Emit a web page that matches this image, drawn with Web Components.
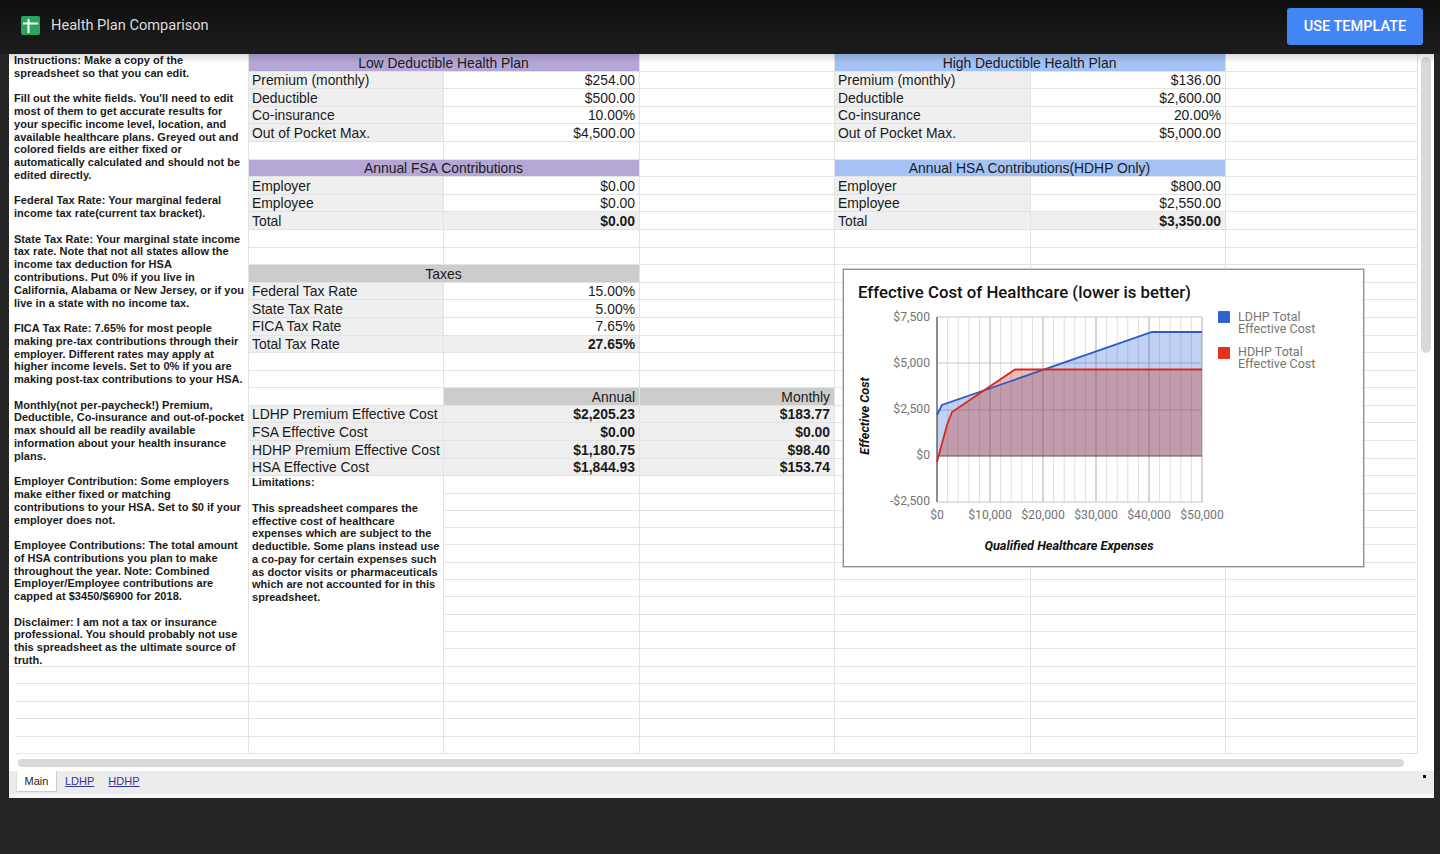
<!DOCTYPE html>
<html>
<head>
<meta charset="utf-8">
<title>Health Plan Comparison</title>
<style>
  html, body { margin: 0; height: 100%; background: #252525; overflow: hidden; }
  body { font-family: "Liberation Sans", Arial, sans-serif; }
</style>
</head>
<body>
<template-bar title="Health Plan Comparison"></template-bar>
<sheet-panel>
  <sheet-grid>
    <div slot="notes">Instructions: Make a copy of the
spreadsheet so that you can edit.

Fill out the white fields. You'll need to edit
most of them to get accurate results for
your specific income level, location, and
available healthcare plans. Greyed out and
colored fields are either fixed or
automatically calculated and should not be
edited directly.

Federal Tax Rate: Your marginal federal
income tax rate(current tax bracket).

State Tax Rate: Your marginal state income
tax rate. Note that not all states allow the
income tax deduction for HSA
contributions. Put 0% if you live in
California, Alabama or New Jersey, or if you
live in a state with no income tax.

FICA Tax Rate: 7.65% for most people
making pre-tax contributions through their
employer. Different rates may apply at
higher income levels. Set to 0% if you are
making post-tax contributions to your HSA.

Monthly(not per-paycheck!) Premium,
Deductible, Co-insurance and out-of-pocket
max should all be readily available
information about your health insurance
plans.

Employer Contribution: Some employers
make either fixed or matching
contributions to your HSA. Set to $0 if your
employer does not.

Employee Contributions: The total amount
of HSA contributions you plan to make
throughout the year. Note: Combined
Employer/Employee contributions are
capped at $3450/$6900 for 2018.

Disclaimer: I am not a tax or insurance
professional. You should probably not use
this spreadsheet as the ultimate source of
truth.</div>
    <div slot="limits">Limitations:

This spreadsheet compares the
effective cost of healthcare
expenses which are subject to the
deductible. Some plans instead use
a co-pay for certain expenses such
as doctor visits or pharmaceuticals
which are not accounted for in this
spreadsheet.</div>
    <cost-chart slot="chart"></cost-chart>
  </sheet-grid>
</sheet-panel>

<script>
class TemplateBar extends HTMLElement {
  connectedCallback() {
    this.attachShadow({ mode: "open" });
    this.shadowRoot.innerHTML = `
      <style>
        :host {
          display: flex;
          align-items: center;
          height: 54px;
          padding: 0 17px 4px 21px;
          box-sizing: border-box;
          background: linear-gradient(#0f0f0f, #1c1c1c);
          font-family: Roboto, sans-serif;
        }
        svg { width: 19px; height: 19px; margin-right: 11px; }
        .name { flex: 1; font-size: 14.6px; color: #dcdcdc; }
        button {
          width: 136px;
          height: 37px;
          margin-top: 3px;
          border: 0;
          border-radius: 3px;
          background: #4285f4;
          color: #fff;
          font: 500 14.5px Roboto, sans-serif;
        }
      </style>
      <svg viewBox="0 0 19 19">
        <rect width="19" height="19" rx="2" fill="#2ca45f"/>
        <path d="M2 7.5h15M7.5 3v14" stroke="#fff" stroke-width="2" fill="none"/>
      </svg>
      <div class="name">${this.getAttribute("title")}</div>
      <button>USE TEMPLATE</button>
    `;
  }
}

class SheetPanel extends HTMLElement {
  connectedCallback() {
    this.attachShadow({ mode: "open" });
    this.shadowRoot.innerHTML = `
      <style>
        :host {
          display: flex;
          flex-direction: column;
          position: relative;
          height: 744px;
          margin: 0 6px 0 9px;
          background: #fff;
        }
        .shade {
          position: absolute;
          left: 0;
          right: 0;
          top: 0;
          height: 9px;
          background: linear-gradient(rgba(0,0,0,.14), rgba(0,0,0,0));
        }
        .top { display: flex; height: 701px; }
        .vbar {
          width: 10px;
          height: 296px;
          margin: 3px 3px 0 3px;
          border-radius: 5px;
          background: #d9d9dd;
        }
        .hbar {
          width: 1386px;
          height: 8px;
          margin: 4px 0 4px 9px;
          border-radius: 4px;
          background: #d9d9dd;
        }
        .tabs {
          position: relative;
          display: flex;
          align-items: flex-start;
          height: 27px;
          padding-left: 7px;
          box-sizing: border-box;
          background: #ececec;
          box-shadow: inset 0 -4px 0 #f5f5f5;
          font: 11px "Liberation Sans", Arial, sans-serif;
        }
        .main {
          width: 41px;
          height: 21px;
          line-height: 21px;
          text-align: center;
          box-sizing: border-box;
          background: #fff;
          color: #222;
          border-left: 1px solid #ddd;
          border-right: 1px solid #ccc;
          border-bottom: 1px solid #ccc;
        }
        a { line-height: 21px; color: #35359a; margin-left: 8px; }
        a + a { margin-left: 14px; }
        .dot {
          position: absolute;
          right: 8px;
          top: 4px;
          width: 3px;
          height: 3px;
          background: #111;
        }
      </style>
      <div class="top"><slot></slot><div class="vbar"></div></div>
      <div class="hbar"></div>
      <div class="tabs">
        <div class="main">Main</div>
        <a href="#">LDHP</a>
        <a href="#">HDHP</a>
        <div class="dot"></div>
      </div>
      <div class="shade"></div>
    `;
  }
}

// [row, col, span, text, class]
const CELLS = [
  [1, 2, 2, "Low Deductible Health Plan", "head purple"],
  [1, 5, 2, "High Deductible Health Plan", "head blue"],
  [7, 2, 2, "Annual FSA Contributions", "head purple"],
  [7, 5, 2, "Annual HSA Contributions(HDHP Only)", "head blue"],
  [13, 2, 2, "Taxes", "head grey"],
  [20, 3, 1, "Annual", "num grey"],
  [20, 4, 1, "Monthly", "num grey"],
];

function pairs(row, col, list) {
  list.forEach((p, i) => {
    CELLS.push([row + i, col, 1, p[0], "label"]);
    CELLS.push([row + i, col + 1, 1, p[1], p[2] ? "num total" : "num"]);
  });
}
pairs(2, 2, [["Premium (monthly)", "$254.00"], ["Deductible", "$500.00"], ["Co-insurance", "10.00%"], ["Out of Pocket Max.", "$4,500.00"]]);
pairs(2, 5, [["Premium (monthly)", "$136.00"], ["Deductible", "$2,600.00"], ["Co-insurance", "20.00%"], ["Out of Pocket Max.", "$5,000.00"]]);
pairs(8, 2, [["Employer", "$0.00"], ["Employee", "$0.00"], ["Total", "$0.00", 1]]);
pairs(8, 5, [["Employer", "$800.00"], ["Employee", "$2,550.00"], ["Total", "$3,350.00", 1]]);
pairs(14, 2, [["Federal Tax Rate", "15.00%"], ["State Tax Rate", "5.00%"], ["FICA Tax Rate", "7.65%"], ["Total Tax Rate", "27.65%", 1]]);
[
  ["LDHP Premium Effective Cost", "$2,205.23", "$183.77"],
  ["FSA Effective Cost", "$0.00", "$0.00"],
  ["HDHP Premium Effective Cost", "$1,180.75", "$98.40"],
  ["HSA Effective Cost", "$1,844.93", "$153.74"],
].forEach((r, i) => {
  CELLS.push([21 + i, 2, 1, r[0], "label"]);
  CELLS.push([21 + i, 3, 1, r[1], "num total"]);
  CELLS.push([21 + i, 4, 1, r[2], "num total"]);
});

class SheetGrid extends HTMLElement {
  connectedCallback() {
    this.attachShadow({ mode: "open" });
    const taken = new Set();
    let html = "";
    CELLS.forEach(([row, col, span, text, cls]) => {
      for (let i = 0; i < span; i++) taken.add(row + ":" + (col + i));
      html += `<div class="cell ${cls}" style="grid-area:${row}/${col}/span 1/span ${span}">${text}</div>`;
    });
    // blank cells fill whatever the table and the two merged notes leave free
    for (let row = 1; row <= 40; row++) {
      for (let col = 1; col <= 7; col++) {
        if (taken.has(row + ":" + col)) continue;
        if (col === 1 && row <= 35) continue;
        if (col === 2 && row >= 25 && row <= 35) continue;
        html += `<div class="cell${col === 1 ? " first" : ""}" style="grid-area:${row}/${col}"></div>`;
      }
    }
    this.shadowRoot.innerHTML = `
      <style>
        :host {
          display: block;
          position: relative;
          width: 1409px;
          height: 701px;
          color: #1a1a1a;
        }
        .grid {
          display: grid;
          grid-template-columns: 240px 195px 196px 195px 196px 195px 192px;
          grid-template-rows: repeat(24, 17.6px) repeat(11, 17.3px) repeat(5, 17.6px);
          font: 13.9px/17px "Liberation Sans", Arial, sans-serif;
        }
        .cell {
          box-sizing: border-box;
          min-width: 0;
          padding: .5px 4px 0 3px;
          white-space: nowrap;
          border-right: 1px solid #e3e3e3;
          border-bottom: 1px solid #e3e3e3;
        }
        .first { margin-left: 6px; }
        .head { text-align: center; }
        .num { text-align: right; }
        .label { background: #efefef; }
        .total { background: #efefef; font-weight: bold; }
        .purple { background: #b4a7d6; }
        .blue { background: #a4c2f4; }
        .grey { background: #ccc; }
        .note {
          box-sizing: border-box;
          padding: 0 3px 0 5px;
          white-space: pre-line;
          overflow: visible;
          font: bold 11px/12.77px "Liberation Sans", Arial, sans-serif;
          letter-spacing: .03px;
          border-right: 1px solid #e3e3e3;
          border-bottom: 1px solid #e3e3e3;
        }
        .note.limits { padding-left: 3px; }
      </style>
      <div class="grid">
        <div class="note" style="grid-area:1/1/span 35/span 1"><slot name="notes"></slot></div>
        <div class="note limits" style="grid-area:25/2/span 11/span 1"><slot name="limits"></slot></div>
        ${html}
      </div>
      <slot name="chart"></slot>
    `;
  }
}

class CostChart extends HTMLElement {
  connectedCallback() {
    this.attachShadow({ mode: "open" });
    const left = 937, right = 1202, top = 317, bottom = 502, zero = 456;
    let grid = "";
    for (let i = 0; i <= 25; i++) {
      const x = left + i * 10.6;
      grid += `<line x1="${x}" x2="${x}" y1="${top}" y2="${bottom}" stroke="${i % 5 ? "#dedede" : "#adadad"}"/>`;
    }
    [317, 363, 410, 502].forEach(y => {
      grid += `<line x1="${left}" x2="${right}" y1="${y}" y2="${y}" stroke="#c4c4c4"/>`;
    });
    const ldhp = "937,415 942,405 1152,332 1202,332";
    const hdhp = "937,462 947,425 952,412 1015,369.5 1202,369.5";
    const yLabels = [["$7,500", 317], ["$5,000", 363], ["$2,500", 409], ["$0", 455], ["-$2,500", 501]];
    const xLabels = ["$0", "$10,000", "$20,000", "$30,000", "$40,000", "$50,000"];
    this.shadowRoot.innerHTML = `
      <style>
        :host {
          position: absolute;
          left: 834px;
          top: 215px;
          width: 521px;
          height: 298px;
          box-sizing: border-box;
          background: #fff;
          border: 1px solid #8f8f8f;
          outline: 1px solid #d4d4d4;
        }
        svg { display: block; font-family: Roboto, sans-serif; }
        .tick { font-size: 12.2px; fill: #757575; }
        .axis { font-size: 12.7px; font-weight: 700; font-style: italic; fill: #111; }
        .legend { font-size: 12.5px; fill: #757575; }
      </style>
      <svg width="519" height="296" viewBox="844 270 519 296">
        <text x="858" y="298" font-size="16.8" font-weight="500" fill="#111">Effective Cost of Healthcare (lower is better)</text>
        ${grid}
        <polygon points="937,${zero} ${ldhp} 1202,${zero}" fill="#3367d6" fill-opacity=".3"/>
        <polygon points="937,${zero} ${hdhp} 1202,${zero}" fill="#c4301c" fill-opacity=".33"/>
        <line x1="${left}" x2="${left}" y1="${top}" y2="${bottom}" stroke="#444"/>
        <line x1="${left}" x2="${right}" y1="${zero}" y2="${zero}" stroke="#555"/>
        <polyline points="${ldhp}" fill="none" stroke="#2a5cc4" stroke-width="1.8"/>
        <polyline points="${hdhp}" fill="none" stroke="#d8281c" stroke-width="1.8"/>
        ${yLabels.map(([t, y]) => `<text class="tick" x="930" y="${y + 4}" text-anchor="end">${t}</text>`).join("")}
        ${xLabels.map((t, i) => `<text class="tick" x="${left + i * 53}" y="519" text-anchor="middle">${t}</text>`).join("")}
        <text class="axis" transform="translate(869 416) rotate(-90)" text-anchor="middle">Effective Cost</text>
        <text class="axis" x="1069" y="550" text-anchor="middle">Qualified Healthcare Expenses</text>
        <rect x="1218" y="311" width="12" height="12" rx="1" fill="#2f62cc"/>
        <text class="legend" x="1238" y="321">LDHP Total <tspan x="1238" dy="12">Effective Cost</tspan></text>
        <rect x="1218" y="347" width="12" height="12" rx="1" fill="#e2331c"/>
        <text class="legend" x="1238" y="356">HDHP Total <tspan x="1238" dy="12">Effective Cost</tspan></text>
      </svg>
    `;
  }
}

customElements.define("template-bar", TemplateBar);
customElements.define("sheet-panel", SheetPanel);
customElements.define("sheet-grid", SheetGrid);
customElements.define("cost-chart", CostChart);
</script>
</body>
</html>
